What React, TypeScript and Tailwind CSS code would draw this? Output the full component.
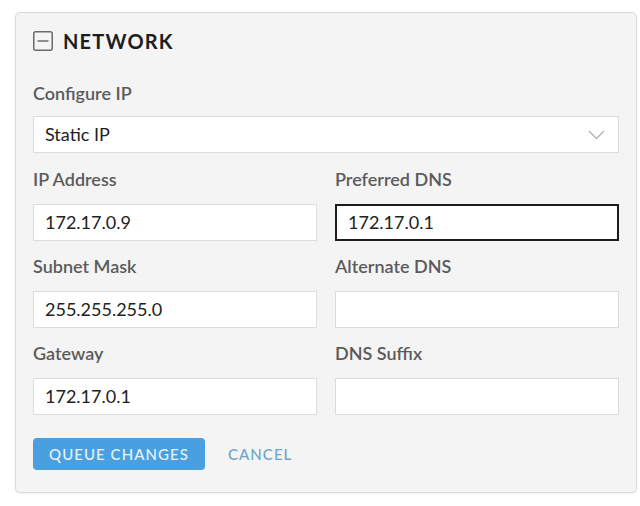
import React from "react";

const font = { fontFamily: "Lato, 'Open Sans', sans-serif" };

function Field({ label, value, focused }: { label: string; value?: string; focused?: boolean }) {
  return (
    <div className="flex flex-col">
      <label className="mb-[15px] h-[20px] text-[18px] leading-[20px] font-semibold text-[#5b5b5b]">{label}</label>
      <div
        className={`flex h-[37px] items-center bg-white pl-[11px] text-[18px] text-[#222] ${
          focused ? "border-2 border-[#1c1c1c] pl-[10px]" : "border border-[#dcdcdc]"
        }`}
      >
        {value}
      </div>
    </div>
  );
}

export default function App() {
  return (
    <div className="min-h-[506px] bg-white pt-[12px] pl-[15px] pr-[3px]" style={font}>
      <div className="rounded-[5px] border border-[#d9d9d9] bg-[#f4f4f5] px-[17px] pt-[16px] pb-[22px] shadow-[0_1px_2px_rgba(0,0,0,0.06)]">
        <div className="flex h-[24px] items-center">
          <svg width="20" height="20" viewBox="0 0 20 20" className="mr-[10px]">
            <rect x="0.75" y="0.75" width="18.5" height="18.5" rx="2" fill="none" stroke="#6b6b6b" strokeWidth="1.5" />
            <line x1="4.5" y1="10" x2="15.5" y2="10" stroke="#6b6b6b" strokeWidth="1.5" />
          </svg>
          <span className="text-[20px] leading-[24px] font-bold tracking-[0.06em] text-[#1d1d1d]">NETWORK</span>
        </div>

        <div className="mt-[30px] flex flex-col">
          <label className="mb-[13px] h-[20px] text-[18px] leading-[20px] font-semibold text-[#5b5b5b]">Configure IP</label>
          <div className="flex h-[37px] items-center justify-between border border-[#dcdcdc] bg-white pl-[11px] pr-[13px] text-[18px] text-[#222]">
            <span>Static IP</span>
            <svg width="17" height="10" viewBox="0 0 17 10">
              <polyline points="1,1 8.5,8.5 16,1" fill="none" stroke="#b0b0b0" strokeWidth="1.3" />
            </svg>
          </div>
        </div>

        <div className="mt-[16px] grid grid-cols-2 gap-x-[18px] gap-y-[15px]">
          <Field label="IP Address" value="172.17.0.9" />
          <Field label="Preferred DNS" value="172.17.0.1" focused />
          <Field label="Subnet Mask" value="255.255.255.0" />
          <Field label="Alternate DNS" />
          <Field label="Gateway" value="172.17.0.1" />
          <Field label="DNS Suffix" />
        </div>

        <div className="mt-[23px] flex items-center">
          <button className="h-[32px] w-[172px] rounded-[4px] bg-[#4a9fe0] text-[15px] font-medium tracking-[0.07em] text-[#e6f3fc]">
            QUEUE CHANGES
          </button>
          <button className="ml-[23px] text-[15px] font-medium tracking-[0.07em] text-[#6aa6c9]">CANCEL</button>
        </div>
      </div>
    </div>
  );
}
